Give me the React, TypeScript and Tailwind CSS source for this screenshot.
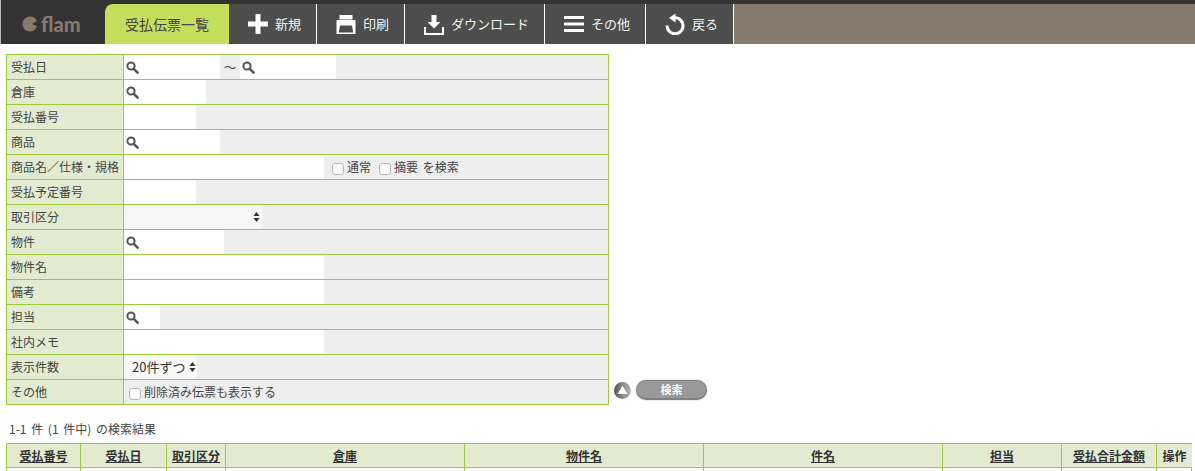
import React from "react";

const font = { fontFamily: '"Noto Sans CJK JP", "Liberation Sans", sans-serif' };

const Search = () => (
  <svg width="13" height="13" viewBox="0 0 13 13" className="shrink-0">
    <circle cx="5" cy="5" r="3.600" fill="none" stroke="#555" strokeWidth="2" />
    <path d="M7.800 7.800l3.800 3.800" stroke="#555" strokeWidth="2.600" strokeLinecap="round" />
  </svg>
);

const Field = ({ w, search }: { w: string; search?: boolean }) => (
  <div className={`h-full bg-white flex items-center pl-[2px] ${w}`}>{search && <Search />}</div>
);

const Check = () => (
  <span className="inline-block w-[12px] h-[12px] mt-[4px] rounded-[3px] border border-[#b5b5b5] bg-white shrink-0" />
);

const Updown = () => (
  <svg width="7" height="12" viewBox="0 0 7 12" className="shrink-0">
    <path d="M3.500 1L6.500 5H.5zM3.500 11L.5 7h6z" fill="#333" />
  </svg>
);

const Row = ({ label, children }: { label: string; children?: React.ReactNode }) => (
  <div className="flex h-[25px] last:h-[24px] border-b border-[#9ecb3c] last:border-b-0">
    <div className="w-[117px] shrink-0 bg-[#e3ebd0] border-r border-[#9ecb3c] pl-[4px] flex items-center text-[12px] text-[#444] whitespace-nowrap">
      {label}
    </div>
    <div className="flex-1 bg-[#eeeeee] flex items-center h-full text-[12px] text-[#444]">{children}</div>
  </div>
);

const NavBtn = ({ w, icon, label }: { w: string; icon: React.ReactNode; label: string }) => (
  <div className={`${w} h-full bg-[#4d4d4d] border-r border-white flex items-center justify-center gap-[7px] pl-[4px] text-[13px] text-[#f2f2f2] shrink-0 whitespace-nowrap`}>
    {icon}
    <span>{label}</span>
  </div>
);

const Th = ({ label, w, plain }: { label: string; w: string; plain?: boolean }) => (
  <div className={`${w} h-full shrink-0 bg-[#e3ebd0] border-r border-[#9ecb3c] last:border-r-0 flex items-center justify-center text-[12px] font-bold text-[#333] ${plain ? "" : "underline"}`}>
    {label}
  </div>
);

const Td = ({ w }: { w: string }) => <div className={`${w} h-full shrink-0 border-r border-[#9ecb3c] last:border-r-0`} />;

const cols = ["w-[74px]", "w-[86px]", "w-[59px]", "w-[239px]", "w-[239px]", "w-[239px]", "w-[119px]", "w-[95px]", "w-[35px]"];

export default function App() {
  return (
    <div className="w-[1195px] h-[471px] overflow-hidden bg-white" style={font}>
      <div className="h-[44px] bg-[#333333] pt-[4px] border-l border-[#bbbbbb]">
        <div className="flex h-[40px]">
          <div className="w-[104px] shrink-0 flex items-center pl-[21px] gap-[3px] text-[#857b6e]">
            <svg width="16" height="16" viewBox="0 0 16 16">
              <path d="M8 .5a7.500 7.500 0 1 0 7.100 9.800L10 8l5-3A7.500 7.500 0 0 0 8 .5z" fill="#857b6e" />
            </svg>
            <span className="text-[20px] font-black leading-none" style={{ fontFamily: "Lato, sans-serif" }}>flam</span>
          </div>
          <div className="w-[124px] shrink-0 bg-[#c5de5b] rounded-tl-[8px] flex items-center justify-center text-[14px] text-[#444]">
            受払伝票一覧
          </div>
          <NavBtn
            w="w-[88px]"
            label="新規"
            icon={
              <svg width="20" height="20" viewBox="0 0 20 20"><path d="M7.500 0h5v7.500H20v5h-7.500V20h-5v-7.500H0v-5h7.500z" fill="#fff" /></svg>
            }
          />
          <NavBtn
            w="w-[88px]"
            label="印刷"
            icon={
              <svg width="20" height="19" viewBox="0 0 20 19">
                <path d="M3.500 0h13v4.500h-13z" fill="#fff" />
                <path fillRule="evenodd" d="M1.500 5h17a1 1 0 0 1 1 1v13H.5V6a1 1 0 0 1 1-1zM4 10.500l-1.200 7h14.400l-1.200-7z" fill="#fff" />
              </svg>
            }
          />
          <NavBtn
            w="w-[140px]"
            label="ダウンロード"
            icon={
              <svg width="20" height="21" viewBox="0 0 20 21">
                <path d="M7.500 1h5v7h4L10 14.500 3.500 8h4z" fill="#fff" />
                <path d="M1 13v7h18v-7" fill="none" stroke="#fff" strokeWidth="2" />
              </svg>
            }
          />
          <NavBtn
            w="w-[101px]"
            label="その他"
            icon={
              <svg width="20" height="16" viewBox="0 0 20 16">
                <path d="M0 0h20v3H0zM0 6.500h20v3H0zM0 13h20v3H0z" fill="#fff" />
              </svg>
            }
          />
          <NavBtn
            w="w-[88px]"
            label="戻る"
            icon={
              <svg width="20" height="22" viewBox="0 0 20 22">
                <path d="M6.500 5.600A8 8 0 1 1 2 12.500" fill="none" stroke="#fff" strokeWidth="3" />
                <path d="M10.500 0.500v9L4 5z" fill="#fff" />
              </svg>
            }
          />
          <div className="flex-1 bg-[#857b6e]" />
        </div>
      </div>

      <div className="flex items-end mt-[10px] ml-[6px]">
        <div className="w-[603px] border border-[#9ecb3c] shrink-0">
          <Row label="受払日">
            <Field w="w-[96px]" search />
            <span className="w-[20px] text-center text-[13px]">～</span>
            <Field w="w-[96px]" search />
          </Row>
          <Row label="倉庫"><Field w="w-[82px]" search /></Row>
          <Row label="受払番号"><Field w="w-[72px]" /></Row>
          <Row label="商品"><Field w="w-[96px]" search /></Row>
          <Row label="商品名／仕様・規格">
            <Field w="w-[200px]" />
            <span className="ml-[8px] flex items-center gap-[3px] [word-spacing:2px]"><Check />通常</span>
            <span className="ml-[8px] flex items-center gap-[3px] [word-spacing:2px]"><Check />摘要 を検索</span>
          </Row>
          <Row label="受払予定番号"><Field w="w-[72px]" /></Row>
          <Row label="取引区分">
            <div className="w-[139px] h-[23px] bg-[#f6f6f6] rounded-[4px] flex items-center justify-end pr-[3px]"><Updown /></div>
          </Row>
          <Row label="物件"><Field w="w-[100px]" search /></Row>
          <Row label="物件名"><Field w="w-[200px]" /></Row>
          <Row label="備考"><Field w="w-[200px]" /></Row>
          <Row label="担当"><Field w="w-[36px]" search /></Row>
          <Row label="社内メモ"><Field w="w-[200px]" /></Row>
          <Row label="表示件数">
            <div className="w-[73px] h-[23px] bg-[#f9f9f9] rounded-[4px] flex items-center pl-[8px] gap-[4px] text-[13px] text-[#333] whitespace-nowrap">
              <span>20件ずつ</span><Updown />
            </div>
          </Row>
          <Row label="その他">
            <span className="ml-[5px] flex items-center gap-[3px]"><Check />削除済み伝票も表示する</span>
          </Row>
        </div>
        <div className="flex items-center ml-[5px] mb-[5px] gap-[5px]">
          <svg width="17" height="17" viewBox="0 0 17 17">
            <defs>
              <linearGradient id="g" x1="0" x2="1" y1="0" y2="0">
                <stop offset="0" stopColor="#555" />
                <stop offset="1" stopColor="#bbb" />
              </linearGradient>
            </defs>
            <circle cx="8.500" cy="8.500" r="8.500" fill="url(#g)" />
            <path d="M8.500 3.500L13.500 12h-10z" fill="#fff" />
          </svg>
          <div className="w-[71px] h-[20px] rounded-full bg-[#999999] border border-[#808080] border-b-2 shadow-[0_0_2px_#bbb] flex items-center justify-center text-[11px] font-bold text-white">
            検索
          </div>
        </div>
      </div>

      <div className="ml-[9px] mt-[15px] h-[17px] text-[12px] text-[#444] leading-[17px] [word-spacing:2px]">1-1 件 (1 件中) の検索結果</div>

      <div className="ml-[6px] mt-[6px] w-[1186px] border border-[#9ecb3c]">
        <div className="flex h-[24px] border-b border-[#9ecb3c]">
          <Th w={cols[0]} label="受払番号" />
          <Th w={cols[1]} label="受払日" />
          <Th w={cols[2]} label="取引区分" />
          <Th w={cols[3]} label="倉庫" />
          <Th w={cols[4]} label="物件名" />
          <Th w={cols[5]} label="件名" />
          <Th w={cols[6]} label="担当" />
          <Th w={cols[7]} label="受払合計金額" />
          <Th w={cols[8]} label="操作" plain />
        </div>
        <div className="flex h-[24px]">
          {cols.map((c, i) => <Td key={i} w={c} />)}
        </div>
      </div>
    </div>
  );
}
